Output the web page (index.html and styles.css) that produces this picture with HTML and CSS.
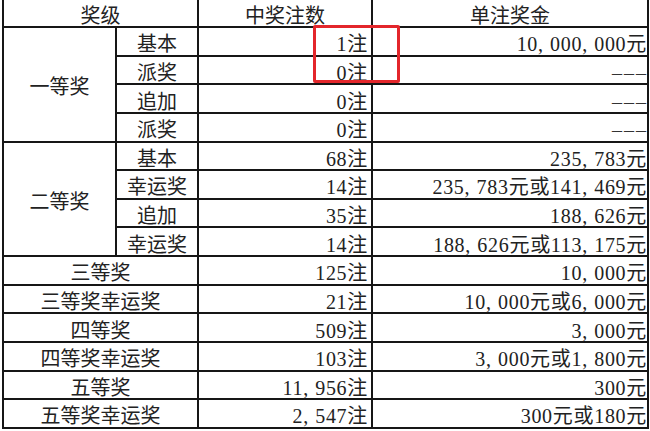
FILE: index.html
```html
<!DOCTYPE html>
<html lang="zh-CN">
<head>
<meta charset="utf-8">
<title>开奖详情</title>
<link rel="stylesheet" href="styles.css">
</head>
<body>
<div class="sheet">
  <table class="prize">
    <colgroup>
      <col class="c-level">
      <col class="c-sub">
      <col class="c-count">
      <col class="c-money">
    </colgroup>
    <thead>
      <tr class="head">
        <th colspan="2">奖级</th>
        <th>中奖注数</th>
        <th>单注奖金</th>
      </tr>
    </thead>
    <tbody>
      <tr class="row">
        <td rowspan="4" class="lvl">一等奖</td>
        <td class="sub">基本</td>
        <td class="num">1注</td>
        <td class="num money">10<span class="cm">,</span>000<span class="cm">,</span>000元</td>
      </tr>
      <tr class="row">
        <td class="sub">派奖</td>
        <td class="num">0注</td>
        <td class="num money"><span class="dash">–––</span></td>
      </tr>
      <tr class="row">
        <td class="sub">追加</td>
        <td class="num">0注</td>
        <td class="num money"><span class="dash">–––</span></td>
      </tr>
      <tr class="row">
        <td class="sub">派奖</td>
        <td class="num">0注</td>
        <td class="num money"><span class="dash">–––</span></td>
      </tr>
      <tr class="row">
        <td rowspan="4" class="lvl">二等奖</td>
        <td class="sub">基本</td>
        <td class="num">68注</td>
        <td class="num money">235<span class="cm">,</span>783元</td>
      </tr>
      <tr class="row">
        <td class="sub">幸运奖</td>
        <td class="num">14注</td>
        <td class="num money">235<span class="cm">,</span>783元或141<span class="cm">,</span>469元</td>
      </tr>
      <tr class="row">
        <td class="sub">追加</td>
        <td class="num">35注</td>
        <td class="num money">188<span class="cm">,</span>626元</td>
      </tr>
      <tr class="row">
        <td class="sub">幸运奖</td>
        <td class="num">14注</td>
        <td class="num money">188<span class="cm">,</span>626元或113<span class="cm">,</span>175元</td>
      </tr>
      <tr class="row">
        <td colspan="2" class="lvl">三等奖</td>
        <td class="num">125注</td>
        <td class="num money">10<span class="cm">,</span>000元</td>
      </tr>
      <tr class="row">
        <td colspan="2" class="lvl">三等奖幸运奖</td>
        <td class="num">21注</td>
        <td class="num money">10<span class="cm">,</span>000元或6<span class="cm">,</span>000元</td>
      </tr>
      <tr class="row">
        <td colspan="2" class="lvl">四等奖</td>
        <td class="num">509注</td>
        <td class="num money">3<span class="cm">,</span>000元</td>
      </tr>
      <tr class="row">
        <td colspan="2" class="lvl">四等奖幸运奖</td>
        <td class="num">103注</td>
        <td class="num money">3<span class="cm">,</span>000元或1<span class="cm">,</span>800元</td>
      </tr>
      <tr class="row">
        <td colspan="2" class="lvl">五等奖</td>
        <td class="num">11<span class="cm">,</span>956注</td>
        <td class="num money">300元</td>
      </tr>
      <tr class="row">
        <td colspan="2" class="lvl">五等奖幸运奖</td>
        <td class="num">2<span class="cm">,</span>547注</td>
        <td class="num money">300元或180元</td>
      </tr>
    </tbody>
  </table>
  <div class="mark"></div>
</div>
</body>
</html>
```

FILE: styles.css
```css
html, body {
  margin: 0;
  padding: 0;
  background: #ffffff;
}

body {
  font-family: "Liberation Serif", "Noto Sans CJK SC", serif;
  font-size: 20px;
  color: #222222;
  overflow: hidden;
}

.sheet {
  position: relative;
  padding-left: 2px;
}

.prize {
  border-collapse: collapse;
  table-layout: fixed;
  width: 647px;
}

.c-level { width: 113px; }
.c-sub { width: 82px; }
.c-count { width: 174px; }
.c-money { width: 276px; }

.prize th,
.prize td {
  border: 2px solid #161616;
  padding: 6px 4px 0 4px;
  line-height: 20px;
  font-weight: normal;
  white-space: nowrap;
  vertical-align: middle;
}

.prize th {
  border-top: 0;
  text-align: center;
}

.head {
  height: 27px;
}

.row {
  height: 28.64px;
}

.lvl,
.sub {
  text-align: center;
}

.num {
  text-align: right;
  letter-spacing: 0.7px;
}

.prize .num {
  padding-right: 3px;
}

.prize .money {
  padding-right: 0;
}

.cm {
  display: inline-block;
  width: 0.6em;
  text-align: left;
}

.dash {
  letter-spacing: 2px;
  margin-right: -1px;
  color: #333333;
}

.mark {
  position: absolute;
  left: 313px;
  top: 25px;
  width: 87px;
  height: 58px;
  box-sizing: border-box;
  border: 3px solid #e3262b;
  border-radius: 2px;
}
```
